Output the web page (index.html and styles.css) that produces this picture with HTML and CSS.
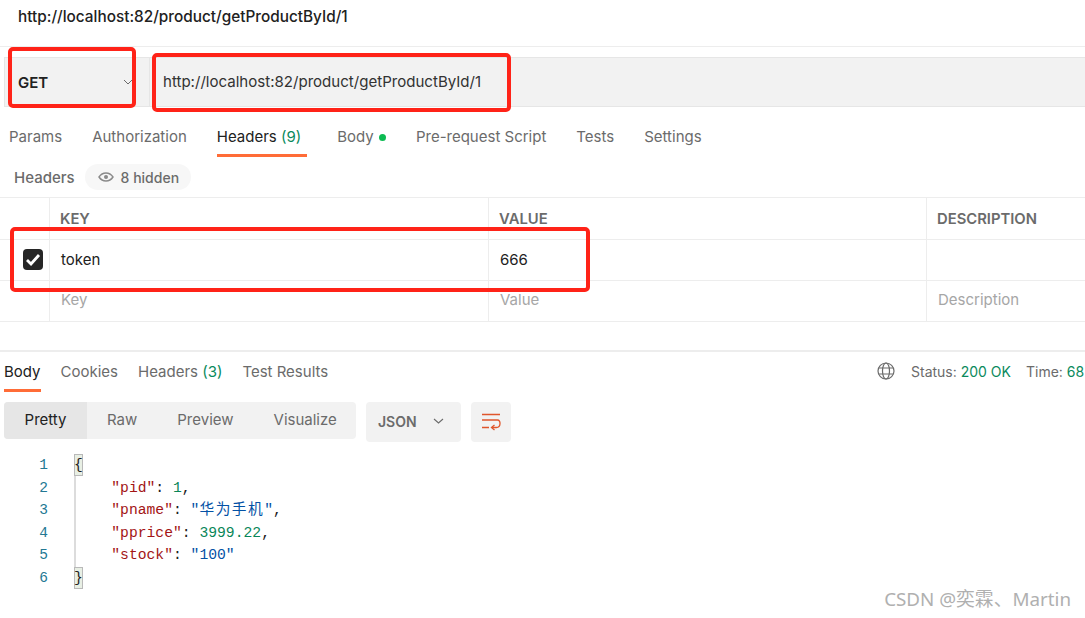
FILE: index.html
```html
<!DOCTYPE html>
<html lang="en">
<head>
<meta charset="utf-8">
<title>Postman request</title>
<link rel="stylesheet" href="styles.css">
</head>
<body>
<div class="page">
  <header class="title-row"><span class="title">http://localhost:82/product/getProductById/1</span></header>

  <div class="url-bar">
    <div class="method">
      <span class="method-name">GET</span>
      <svg class="chev" width="10" height="6" viewBox="0 0 10 6"><path d="M1 1l4 4 4-4" fill="none" stroke="#6b6b6b" stroke-width="1"/></svg>
    </div>
    <div class="url-value">http://localhost:82/product/getProductById/1</div>
  </div>

  <nav class="tabs req-tabs">
    <span class="tab">Params</span>
    <span class="tab">Authorization</span>
    <span class="tab active wide">Headers <em class="count">(9)</em></span>
    <span class="tab">Body <i class="dot"></i></span>
    <span class="tab">Pre-request Script</span>
    <span class="tab">Tests</span>
    <span class="tab">Settings</span>
  </nav>

  <div class="headers-bar">
    <span class="headers-label">Headers</span>
    <span class="hidden-pill">
      <svg width="16" height="10" viewBox="0 0 16 10"><path d="M1 5c2-3 4.500-4 7-4s5 1 7 4c-2 3-4.500 4-7 4s-5-1-7-4z" fill="none" stroke="#8a8a8a" stroke-width="1.400"/><circle cx="8" cy="5" r="2" fill="#8a8a8a"/></svg>
      8 hidden
    </span>
  </div>

  <div class="table">
    <div class="tr th">
      <div class="cell check"></div>
      <div class="cell key">KEY</div>
      <div class="cell value">VALUE</div>
      <div class="cell desc">DESCRIPTION</div>
    </div>
    <div class="tr">
      <div class="cell check">
        <span class="checkbox"><svg width="16" height="13" viewBox="0 0 16 13"><path d="M2 7l4 4 8-9" fill="none" stroke="#fff" stroke-width="2.800"/></svg></span>
      </div>
      <div class="cell key data">token</div>
      <div class="cell value data">666</div>
      <div class="cell desc"></div>
    </div>
    <div class="tr">
      <div class="cell check"></div>
      <div class="cell key ph">Key</div>
      <div class="cell value ph">Value</div>
      <div class="cell desc ph">Description</div>
    </div>
  </div>

  <section class="response">
    <div class="resp-head">
      <nav class="tabs resp-tabs">
        <span class="tab active">Body</span>
        <span class="tab">Cookies</span>
        <span class="tab">Headers <em class="count">(3)</em></span>
        <span class="tab">Test Results</span>
      </nav>
      <div class="status">
        <svg class="globe" width="18" height="18" viewBox="0 0 18 18" fill="none" stroke="#6b6b6b" stroke-width="1.200"><circle cx="9" cy="9" r="8"/><ellipse cx="9" cy="9" rx="3.500" ry="8"/><path d="M1.800 6h14.400M1.800 12h14.400"/></svg>
        <span class="stat">Status: <b>200 OK</b></span>
        <span class="stat">Time: <b>68</b></span>
      </div>
    </div>

    <div class="toolbar">
      <div class="segments">
        <span class="seg selected">Pretty</span>
        <span class="seg raw">Raw</span>
        <span class="seg preview">Preview</span>
        <span class="seg viz">Visualize</span>
      </div>
      <div class="format">
        <span>JSON</span>
        <svg width="11" height="6" viewBox="0 0 11 6"><path d="M1 1l4.500 4L10 1" fill="none" stroke="#6b6b6b" stroke-width="1.100"/></svg>
      </div>
      <div class="wrap-btn">
        <svg width="20" height="18" viewBox="0 0 20 18" fill="none" stroke="#e0562c" stroke-width="1.300"><path d="M1 1.500h18M1 7h15.500c3.500 0 3.500 7.500-1 7.500h-4.500"/><path d="M13.500 12l-3 2.500 3 2.500M1 14.500h7"/></svg>
      </div>
    </div>

    <div class="code">
      <div class="guide"></div>
      <div class="ln"><span class="no">1</span><span class="src"><span class="br">{</span></span></div>
      <div class="ln"><span class="no">2</span><span class="src">    <span class="k">"pid"</span>: <span class="n">1</span>,</span></div>
      <div class="ln"><span class="no">3</span><span class="src">    <span class="k">"pname"</span>: <span class="s">"<span class="cn">华为手机</span>"</span>,</span></div>
      <div class="ln"><span class="no">4</span><span class="src">    <span class="k">"pprice"</span>: <span class="n">3999.22</span>,</span></div>
      <div class="ln"><span class="no">5</span><span class="src">    <span class="k">"stock"</span>: <span class="s">"100"</span></span></div>
      <div class="ln"><span class="no">6</span><span class="src"><span class="br">}</span></span></div>
    </div>
  </section>

  <div class="mark mark-method"></div>
  <div class="mark mark-url"></div>
  <div class="mark mark-row"></div>
  <div class="watermark">CSDN @奕霖、Martin</div>
</div>
</body>
</html>
```
FILE: styles.css
```css
* { box-sizing: border-box; }
html, body { margin: 0; padding: 0; background: #fff; }
.page {
  position: relative;
  width: 1085px;
  height: 618px;
  overflow: hidden;
  font-family: Inter, "Noto Sans CJK SC", sans-serif;
  font-size: 15px;
  color: #6b6b6b;
}
.title-row {
  height: 47px;
  padding: 7px 0 0 18px;
  border-bottom: 1px solid #ededed;
}
.title { font-size: 15.350px; font-weight: 500; color: #212121; line-height: 18px; }

.url-bar {
  display: flex;
  height: 50px;
  margin: 10px 0 0 4px;
  background: #f2f2f2;
  border: 1px solid #e6e6e6;
  border-right: 0;
  color: #212121;
}
.method {
  width: 145px;
  display: flex;
  align-items: center;
  justify-content: space-between;
  padding: 0 0 0 13px;
  border-right: 1px solid #e6e6e6;
}
.method-name { font-weight: 600; font-size: 15px; }
.chev { margin-right: 16px; }
.url-value { padding: 0 0 0 13px; line-height: 48px; font-size: 15.070px; color: #333; }

.tabs { display: flex; }
.tab {
  position: relative;
  white-space: nowrap;
  color: #6b6b6b;
  font-size: 15px;
}
.tab.active { color: #212121; }
.tab.wide { padding-right: 6px; }
.tab.active::after {
  content: "";
  position: absolute;
  left: 0;
  right: 0;
  bottom: 0;
  height: 3px;
  background: #ff6c37;
}
.count { font-style: normal; color: #0a8a5c; }
.dot {
  display: inline-block;
  width: 7px;
  height: 7px;
  margin-left: 1px;
  border-radius: 50%;
  background: #0cbb52;
  vertical-align: 1px;
}
.req-tabs { height: 50px; padding: 0 0 0 9px; gap: 30px; }
.req-tabs .tab { padding-top: 20px; }

.headers-bar {
  display: flex;
  align-items: center;
  gap: 10px;
  height: 40px;
  padding: 0 0 0 14px;
}
.headers-label { font-weight: 500; font-size: 15px; color: #6b6b6b; }
.hidden-pill {
  display: flex;
  align-items: center;
  gap: 7px;
  height: 26px;
  padding: 0 12px 0 13px;
  border-radius: 13px;
  background: #f7f7f7;
  font-size: 14px;
  font-weight: 500;
  color: #6b6b6b;
}

.table { border-top: 1px solid #ededed; }
.tr {
  display: grid;
  grid-template-columns: 50px 439px 438px 1fr;
  height: 41px;
  border-bottom: 1px solid #ededed;
}
.tr.th { height: 42px; }
.cell {
  display: flex;
  align-items: center;
  padding: 0 0 2px 11px;
  border-right: 1px solid #ededed;
  font-size: 15px;
}
.cell.desc { border-right: 0; }
.cell.check { padding: 0 0 1px 23px; }
.th .cell { font-weight: 600; font-size: 14.800px; color: #6b6b6b; padding: 0 0 0 10px; }
.data { color: #212121; }
.cell.ph { color: #a6a6a6; padding-bottom: 3px; }
.checkbox {
  display: flex;
  align-items: center;
  justify-content: center;
  width: 20px;
  height: 21px;
  border-radius: 4px;
  background: #262626;
}

.response {
  margin-top: 28px;
  border-top: 2px solid #ededed;
}
.resp-head {
  display: flex;
  justify-content: space-between;
  height: 40px;
}
.resp-tabs { padding-left: 4px; gap: 20px; }
.resp-tabs .tab { padding-top: 10px; }
.status {
  display: flex;
  align-items: center;
  gap: 15px;
  width: 208px;
  flex: none;
  padding-bottom: 2px;
  white-space: nowrap;
  font-size: 14px;
}
.globe { margin-right: 1px; }
.stat b { font-weight: 400; color: #0a8a5c; }

.toolbar {
  display: flex;
  align-items: flex-start;
  margin: 10px 0 0 4px;
  height: 40px;
}
.segments {
  display: flex;
  width: 352px;
  height: 37px;
  border-radius: 4px;
  background: #f2f2f2;
  overflow: hidden;
}
.seg { line-height: 36px; color: #6b6b6b; }
.seg.selected { width: 83px; background: #e6e6e6; color: #212121; text-align: center; }
.seg.raw { margin-left: 20px; }
.seg.preview { margin-left: 40px; }
.seg.viz { margin-left: 40px; }
.format {
  display: flex;
  align-items: center;
  gap: 16px;
  width: 95px;
  height: 40px;
  margin-left: 10px;
  padding: 0 0 2px 12px;
  border-radius: 4px;
  background: #f2f2f2;
  font-size: 14px;
  font-weight: 600;
  color: #6b6b6b;
}
.wrap-btn {
  display: flex;
  align-items: center;
  justify-content: center;
  width: 40px;
  height: 40px;
  margin-left: 10px;
  border-radius: 4px;
  background: #f2f2f2;
}

.code {
  position: relative;
  margin-top: 12px;
  padding-top: 0.250px;
  font-family: "Liberation Mono", "Noto Sans CJK SC", monospace;
  font-size: 14.700px;
  line-height: 22.500px;
}
.guide {
  position: absolute;
  left: 74px;
  top: 0;
  width: 2px;
  height: 135px;
  background: #dcdcdc;
}
.ln { display: flex; height: 22.500px; white-space: pre; }
.no { width: 48px; text-align: right; color: #237893; font-size: 14.500px; }
.src { position: relative; margin-left: 28px; color: #212121; }
.br {
  display: inline-block;
  width: 9px;
  height: 22px;
  margin-left: -2px;
  background: #e8efe4;
  border: 1px solid #b9b9b9;
  line-height: 20px;
  text-indent: -1px;
}
.cn { letter-spacing: 1.500px; }
.k { color: #a31515; }
.s { color: #0451a5; }
.n { color: #098658; }

.mark {
  position: absolute;
  border: 4px solid #ff2318;
  border-radius: 5px;
}
.mark-method { left: 8px; top: 47px; width: 128px; height: 61px; }
.mark-url { left: 152px; top: 53px; width: 359px; height: 59px; }
.mark-row { left: 10px; top: 227px; width: 580px; height: 65px; }
.watermark {
  position: absolute;
  right: 14px;
  top: 587px;
  font-family: "Noto Sans", "Noto Sans CJK SC", sans-serif;
  font-size: 18.800px;
  line-height: 24px;
  color: #b0b0b0;
  white-space: nowrap;
}
```
